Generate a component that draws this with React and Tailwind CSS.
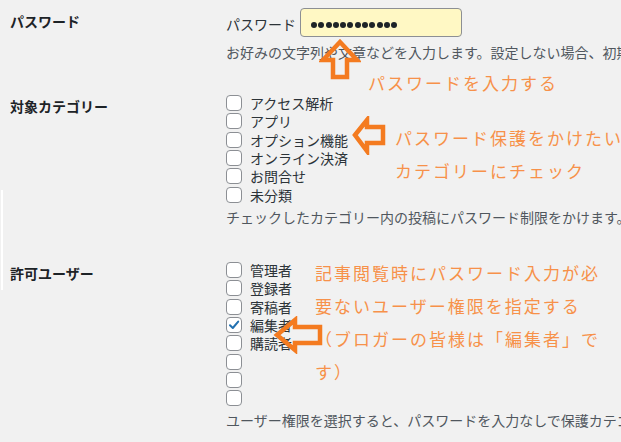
const categories = ['アクセス解析', 'アプリ', 'オプション機能', 'オンライン決済', 'お問合せ', '未分類']

const users = [
  { name: '管理者' },
  { name: '登録者' },
  { name: '寄稿者' },
  { name: '編集者', checked: true },
  { name: '購読者' },
  { name: '' },
  { name: '' },
  { name: '' },
]

const Checkbox = ({ label, checked }) => (
  <label className="flex items-center h-[18.33px] gap-[8px] text-[14px] leading-[18px] text-[#2c3338]">
    <span className="w-[16px] h-[16px] shrink-0 rounded-[4px] border border-[#8c8f94] bg-white flex items-center justify-center">
      {checked && (
        <svg width="12" height="12" viewBox="0 0 12 12">
          <path d="M2 6.3 L4.8 9 L10.2 2.6" fill="none" stroke="#2271b1" strokeWidth="2" strokeLinecap="round" strokeLinejoin="round" />
        </svg>
      )}
    </span>
    {label && <span>{label}</span>}
  </label>
)

const Arrow = ({ className, width, height, points }) => (
  <svg className={className} width={width} height={height} viewBox={`0 0 ${width} ${height}`}>
    <polygon points={points} fill="none" stroke="#f47b20" strokeWidth="4.5" strokeLinejoin="miter" />
  </svg>
)

const Note = ({ className, children }) => (
  <div className={`absolute text-[17px] leading-[33px] tracking-[2px] text-[#f7914a] whitespace-nowrap ${className}`}>
    {children}
  </div>
)

export default function App() {
  return (
    <div
      className="relative w-[621px] h-[442px] overflow-hidden bg-[#f1f1f1] text-[#1d2327]"
      style={{ fontFamily: '"Noto Sans CJK JP", "Noto Sans", sans-serif' }}
    >
      {/* password */}
      <div className="flex">
        <div className="w-[226px] shrink-0 pl-[10px] pt-[11px] text-[14px] leading-[20px] font-bold">パスワード</div>
        <div className="flex-1 min-w-0 pt-[8px] whitespace-nowrap">
          <div className="flex items-center h-[29px] text-[14px]">
            <span className="text-[#2c3338] pt-[3px]">パスワード</span>
            <div className="ml-[4px] w-[162px] h-[29px] rounded-[4px] border border-[#8c8f94] bg-[#fff8c4] flex items-center gap-[1.3px] pl-[10px] pt-[4px]">
              {Array.from({ length: 12 }).map((_, i) => (
                <span key={i} className="w-[6px] h-[6px] rounded-full bg-[#1d2327]" />
              ))}
            </div>
          </div>
          <p className="mt-[5px] text-[14px] leading-[20px] text-[#50575e]">
            お好みの文字列や文章などを入力します。設定しない場合、初期パスワードが使用されます。
          </p>
        </div>
      </div>

      {/* categories */}
      <div className="flex">
        <div className="w-[226px] shrink-0 pl-[10px] pt-[34px] text-[14px] leading-[20px] font-bold">対象カテゴリー</div>
        <div className="flex-1 min-w-0 pt-[32px] whitespace-nowrap">
          {categories.map((c) => (
            <Checkbox key={c} label={c} />
          ))}
          <p className="mt-[3px] text-[14px] leading-[20px] text-[#50575e]">
            チェックしたカテゴリー内の投稿にパスワード制限をかけます。
          </p>
        </div>
      </div>

      {/* users */}
      <div className="flex">
        <div className="w-[226px] shrink-0 pl-[10px] pt-[36px] text-[14px] leading-[20px] font-bold">許可ユーザー</div>
        <div className="flex-1 min-w-0 pt-[34px] whitespace-nowrap">
          {users.map((u, i) => (
            <Checkbox key={i} label={u.name} checked={u.checked} />
          ))}
          <p className="mt-[2px] text-[14px] leading-[20px] text-[#50575e]">
            ユーザー権限を選択すると、パスワードを入力なしで保護カテゴリーの記事を閲覧できます。
          </p>
        </div>
      </div>

      {/* edge line */}
      <div className="absolute left-[1px] top-[190px] w-[2px] h-[100px] bg-white" />

      {/* annotations */}
      <Arrow className="absolute left-[319px] top-[38px]" width={42} height={43} points="21,4 38,22 28,22 28,39 14,39 14,22 4,22" />
      <Note className="left-[368px] top-[66px]">パスワードを入力する</Note>

      <Arrow className="absolute left-[351px] top-[116px]" width={36} height={39} points="4,19 16,4 16,11 32,11 32,27 16,27 16,35" />
      <Note className="left-[395px] top-[121px] leading-[32px]">
        パスワード保護をかけたい<br />カテゴリーにチェック
      </Note>

      <Arrow className="absolute left-[273px] top-[316px]" width={51} height={38} points="4,19 22,4 22,11 47,11 47,27 22,27 22,34" />
      <Note className="left-[315px] top-[256px]">
        記事閲覧時にパスワード入力が必<br />要ないユーザー権限を指定する<br />（ブロガーの皆様は「編集者」で<br />す）
      </Note>
    </div>
  )
}
